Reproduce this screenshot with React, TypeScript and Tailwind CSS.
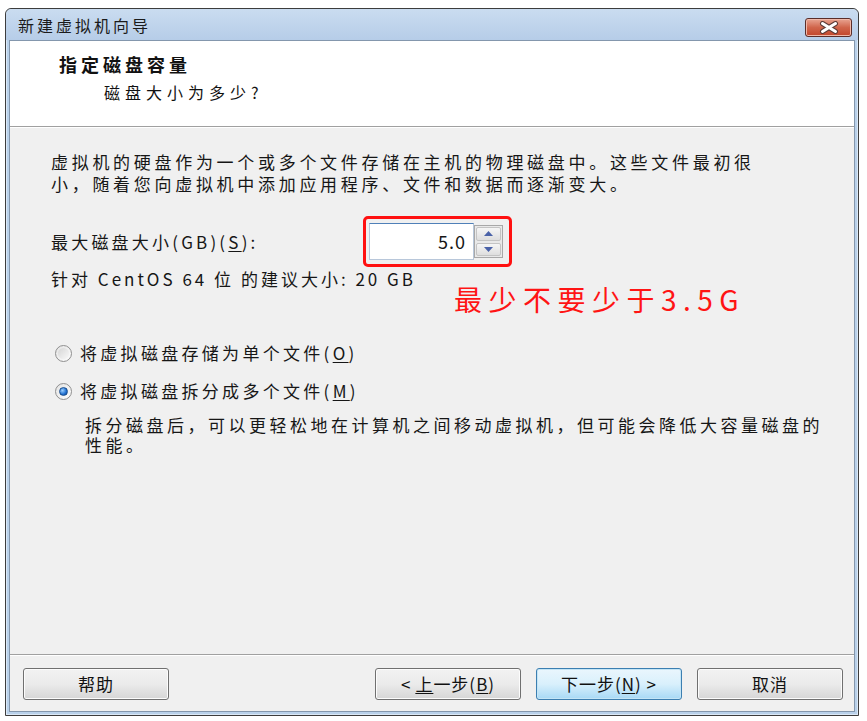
import React from "react";

const cjk = "font-['Noto_Sans_CJK_SC','Noto_Sans',sans-serif]";

const Radio = ({ checked }: { checked?: boolean }) => (
  <span className="flex h-[17px] w-[17px] items-center justify-center rounded-full border border-[#8f8f8f] bg-gradient-to-br from-[#e4e4e4] to-[#fdfdfd]">
    {checked ? (
      <span className="h-[9px] w-[9px] rounded-full border border-[#1a4f8f] bg-[radial-gradient(circle_at_35%_35%,#9cd0ff,#1f6fd0_60%,#0d3f88)]" />
    ) : (
      <span className="h-[11px] w-[11px] rounded-full bg-gradient-to-br from-[#d6d6d6] to-[#f8f8f8]" />
    )}
  </span>
);

const WinButton = ({
  children,
  primary,
  className = "",
}: {
  children: React.ReactNode;
  primary?: boolean;
  className?: string;
}) => (
  <button
    type="button"
    className={
      "flex h-[32px] w-[146px] items-center justify-center rounded-[3px] border text-[17px] tracking-[1px] text-[#111] " +
      (primary
        ? "border-[#3c7fb1] bg-gradient-to-b from-[#eaf6fd] via-[#d9f0fc] to-[#a7d9f5] shadow-[inset_0_0_0_1px_#c4e5f6] "
        : "border-[#707070] bg-gradient-to-b from-[#f2f2f2] via-[#ebebeb] to-[#d6d6d6] shadow-[inset_0_0_0_1px_#fcfcfc] ") +
      className
    }
  >
    {children}
  </button>
);

export default function App() {
  return (
    <div className={`h-[721px] w-[867px] bg-white pl-[5px] pt-[8px] ${cjk}`}>
      {/* window frame */}
      <div className="flex h-[708px] w-[854px] flex-col rounded-t-[6px] border border-[#3d3d3d] bg-[#b9d1ea] shadow-[inset_0_0_0_1px_#dbe8f6]">
        {/* title bar */}
        <div className="flex h-[31px] shrink-0 items-center justify-between rounded-t-[6px] bg-gradient-to-b from-[#cadcf0] to-[#b6cde8] pl-[12px] pr-[6px]">
          <span className="text-[16px] tracking-[3px] text-[#1b1b1b]">新建虚拟机向导</span>
          <span className="mt-[6px] flex h-[19px] w-[47px] items-center justify-center rounded-[3px] border border-[#5a2e2a] bg-gradient-to-b from-[#e8a492] via-[#d0654b] to-[#c2452a] shadow-[inset_0_0_0_1px_#f0b8a8]">
            <svg width="20" height="13" viewBox="0 0 20 13">
              <path d="M3.5 2.5 L16.5 10.5 M16.5 2.5 L3.5 10.5" stroke="#5b3a36" strokeWidth="5" strokeLinecap="round" />
              <path d="M3.5 2.5 L16.5 10.5 M16.5 2.5 L3.5 10.5" stroke="#ffffff" strokeWidth="3" strokeLinecap="round" />
            </svg>
          </span>
        </div>

        {/* client area */}
        <div className="mx-[3px] mb-[3px] flex flex-1 flex-col border border-[#8497ad] bg-[#f0f0f0]">
          {/* header */}
          <div className="h-[86px] shrink-0 border-b border-[#a0a0a0] bg-white pt-[11px]">
            <div className="pl-[49px] text-[18px] font-bold leading-[24px] tracking-[4px] text-[#111]">指定磁盘容量</div>
            <div className="mt-[4px] pl-[94px] text-[16px] leading-[24px] tracking-[5px] text-[#111]">磁盘大小为多少?</div>
          </div>

          {/* body */}
          <div className="relative flex-1 border-t border-white pl-[41px] pt-[23px] text-[17px] text-[#161616]">
            <p className="w-[730px] leading-[22px] tracking-[3.7px]">
              虚拟机的硬盘作为一个或多个文件存储在主机的物理磁盘中。这些文件最初很小，随着您向虚拟机中添加应用程序、文件和数据而逐渐变大。
            </p>

            <div className="mt-[21px] flex h-[51px] items-center">
              <span className="w-[312px] tracking-[3.2px]">
                最大磁盘大小(GB)(<span className="underline underline-offset-2">S</span>):
              </span>
              <div className="flex h-[51px] w-[149px] items-center rounded-[5px] border-[3px] border-[#ff1010] pl-[3px]">
                <div className="flex h-[37px] w-[105px] items-center justify-end border border-[#b8c7da] border-t-[#4f80b8] bg-white pr-[7px] text-[18px] tracking-[1px]">
                  5.0
                </div>
                <div className="flex h-[33px] w-[29px] flex-col gap-[2px] border border-[#a8a8a8] bg-[#e9e9e9] p-[1px]">
                  <span className="flex flex-1 items-center justify-center rounded-[2px] border border-[#c4c4c4] bg-gradient-to-b from-[#f6f6f6] to-[#dedede]">
                    <svg width="9" height="5" viewBox="0 0 9 5"><path d="M0 5 L4.5 0 L9 5 Z" fill="#4a62a8" /></svg>
                  </span>
                  <span className="flex flex-1 items-center justify-center rounded-[2px] border border-[#c4c4c4] bg-gradient-to-b from-[#f6f6f6] to-[#dedede]">
                    <svg width="9" height="5" viewBox="0 0 9 5"><path d="M0 0 L4.5 5 L9 0 Z" fill="#4a62a8" /></svg>
                  </span>
                </div>
              </div>
            </div>

            <div className="mt-[1px] leading-[22px] tracking-[3px]">针对 CentOS 64 位 的建议大小: 20 GB</div>

            {/* annotation added on top of screenshot */}
            <div className="absolute left-[444px] top-[154px] text-[28px] leading-[34px] tracking-[6.5px] text-[#ff1414]">
              最少不要少于3.5G
            </div>

            <div className="mt-[52px] flex items-center gap-[8px] pl-[4px] leading-[22px]">
              <Radio />
              <span className="tracking-[3.3px]">
                将虚拟磁盘存储为单个文件(<span className="underline underline-offset-2">O</span>)
              </span>
            </div>

            <div className="mt-[16px] flex items-center gap-[8px] pl-[4px] leading-[22px]">
              <Radio checked />
              <span className="tracking-[3.3px]">
                将虚拟磁盘拆分成多个文件(<span className="underline underline-offset-2">M</span>)
              </span>
            </div>

            <p className="mt-[13px] w-[780px] pl-[34px] leading-[20px] tracking-[3.5px]">
              拆分磁盘后，可以更轻松地在计算机之间移动虚拟机，但可能会降低大容量磁盘的性能。
            </p>
          </div>

          {/* footer */}
          <div className="flex h-[57px] shrink-0 items-start border-t border-[#a0a0a0] pt-[13px] pl-[13px] pr-[11px] shadow-[inset_0_1px_0_#ffffff]">
            <WinButton>帮助</WinButton>
            <div className="ml-auto flex gap-[15px]">
              <WinButton>
                &lt; <span className="ml-[4px] underline underline-offset-2">上</span>一步(<span className="underline underline-offset-2">B</span>)
              </WinButton>
              <WinButton primary>
                下一步(<span className="underline underline-offset-2">N</span>) &gt;
              </WinButton>
              <WinButton>取消</WinButton>
            </div>
          </div>
        </div>
      </div>
    </div>
  );
}
